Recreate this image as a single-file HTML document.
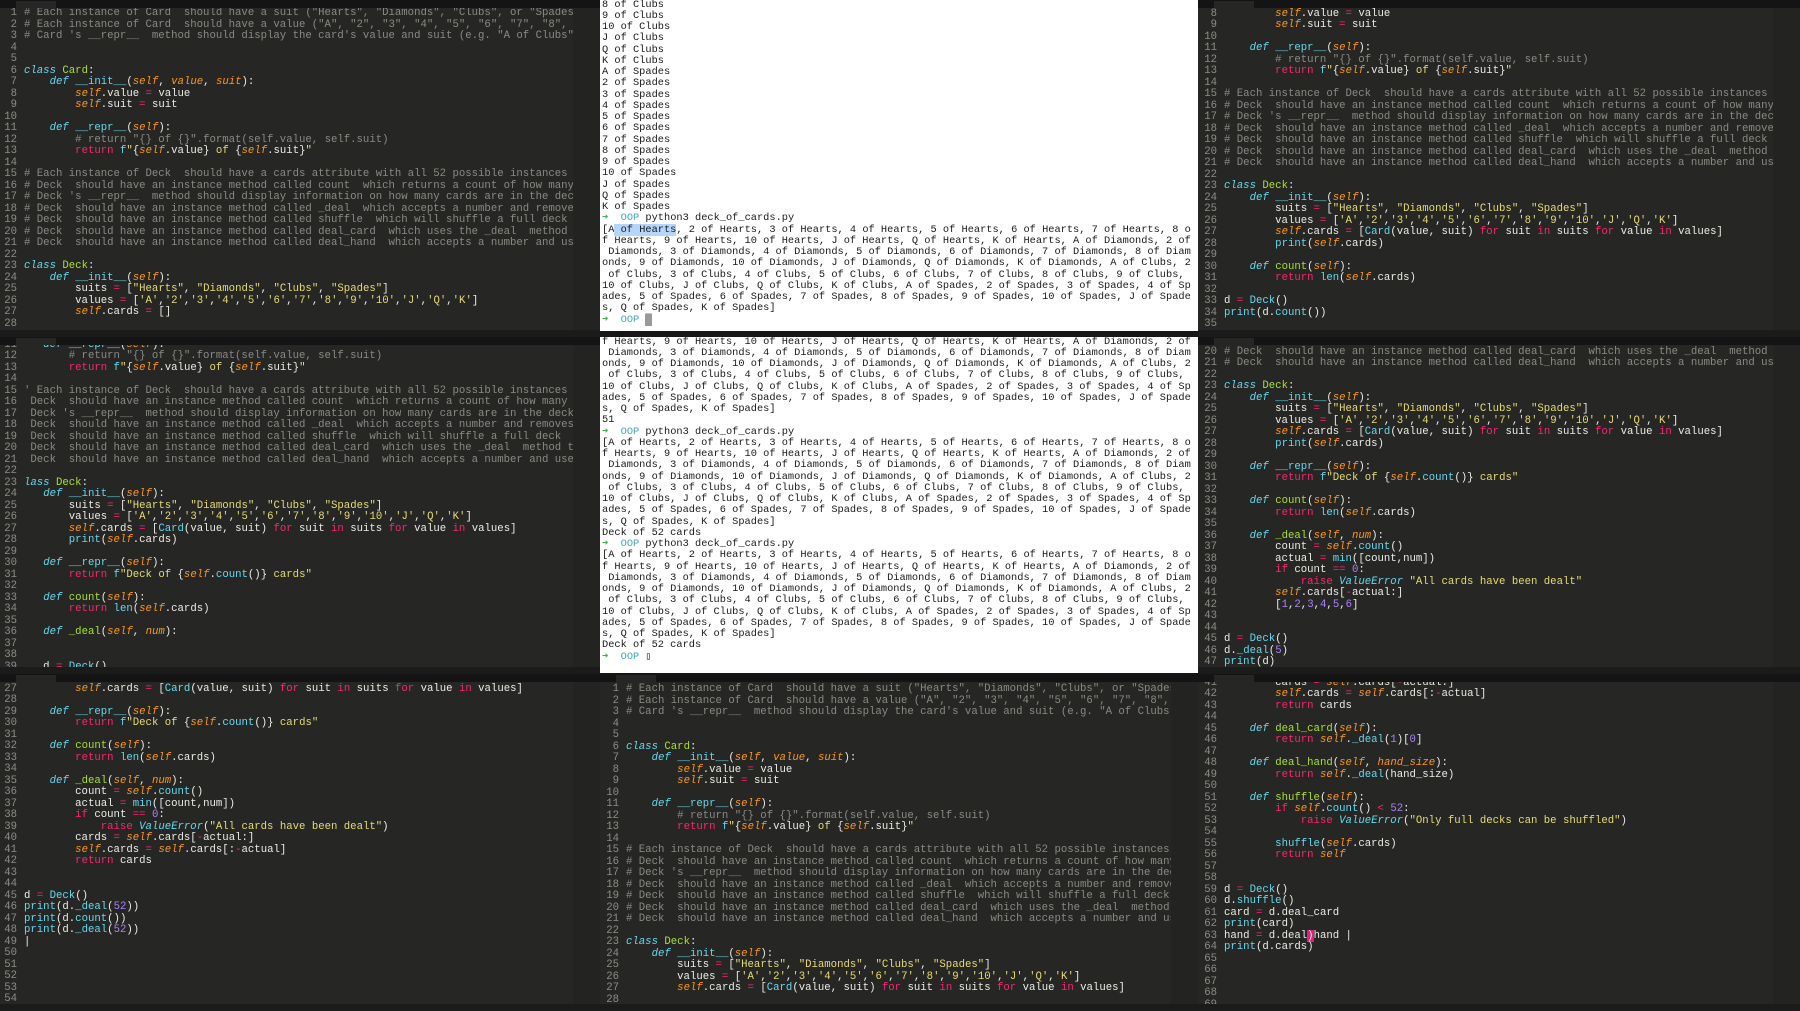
<!DOCTYPE html>
<html><head><meta charset="utf-8"><style>
*{margin:0;padding:0}
body{width:1800px;height:1011px;overflow:hidden;background:#161616;position:relative;font-family:"Liberation Mono",monospace}
.p{position:absolute;overflow:hidden;background:#262624}
.tab{position:absolute;left:0;right:0;top:0;height:8px;background:#141414;z-index:3}
.tab:after{content:"";position:absolute;left:16px;top:1px;width:40px;height:7px;background:#262624}
.st{position:absolute;left:0;right:0;bottom:0;height:7px;background:#1b1b1b;z-index:3}
.mm{position:absolute;right:0;top:0;bottom:0;width:27px;background:#232321;z-index:2}
.code{position:absolute;left:0;font-size:10.67px;line-height:11.5px;white-space:normal;color:#ecece6}
.code div{height:11.5px;white-space:pre}
l{display:inline-block;width:17px;text-align:right;color:#8d8d88;margin-right:7px}
k{color:#66d9ef;font-style:italic}
g{color:#a6e22e}
o{color:#fd971f;font-style:italic}
y{color:#e6db74}
r{color:#f92672}
m{color:#ae81ff}
c{color:#8a8a84}
t{color:#66d9ef}
.term{position:absolute;background:#fff;left:600px;width:598px;overflow:hidden}
.term pre{position:absolute;left:2px;font-family:"Liberation Mono",monospace;font-size:10.33px;line-height:11.25px;color:#1a1a1a}
.ar{color:#39b54a;font-weight:bold}.oo{color:#3aa9bd}
.hl{background:#b5d5fb}
.cur{background:#999;color:#999}
</style></head><body>

<!-- Panel A -->
<div class="p" style="left:0;top:0;width:600px;height:337px">
<div class="tab"></div><div class="mm"></div><div class="st"></div>
<div class="code" style="top:8px">
<div><l>1</l><c># Each instance of Card  should have a suit ("Hearts", "Diamonds", "Clubs", or "Spades")</c></div>
<div><l>2</l><c># Each instance of Card  should have a value ("A", "2", "3", "4", "5", "6", "7", "8", "9", "10")</c></div>
<div><l>3</l><c># Card 's __repr__  method should display the card's value and suit (e.g. "A of Clubs")</c></div>
<div><l>4</l></div>
<div><l>5</l></div>
<div><l>6</l><k>class</k> <g>Card</g>:</div>
<div><l>7</l>    <k>def</k> <t>__init__</t>(<o>self</o>, <o>value</o>, <o>suit</o>):</div>
<div><l>8</l>        <o>self</o>.value <r>=</r> value</div>
<div><l>9</l>        <o>self</o>.suit <r>=</r> suit</div>
<div><l>10</l></div>
<div><l>11</l>    <k>def</k> <t>__repr__</t>(<o>self</o>):</div>
<div><l>12</l>        <c># return "{} of {}".format(self.value, self.suit)</c></div>
<div><l>13</l>        <r>return</r> <t>f</t><y>"</y>{<o>self</o>.value}<y> of </y>{<o>self</o>.suit}<y>"</y></div>
<div><l>14</l></div>
<div><l>15</l><c># Each instance of Deck  should have a cards attribute with all 52 possible instances</c></div>
<div><l>16</l><c># Deck  should have an instance method called count  which returns a count of how many</c></div>
<div><l>17</l><c># Deck 's __repr__  method should display information on how many cards are in the deck</c></div>
<div><l>18</l><c># Deck  should have an instance method called _deal  which accepts a number and removes</c></div>
<div><l>19</l><c># Deck  should have an instance method called shuffle  which will shuffle a full deck</c></div>
<div><l>20</l><c># Deck  should have an instance method called deal_card  which uses the _deal  method</c></div>
<div><l>21</l><c># Deck  should have an instance method called deal_hand  which accepts a number and uses</c></div>
<div><l>22</l></div>
<div><l>23</l><k>class</k> <g>Deck</g>:</div>
<div><l>24</l>    <k>def</k> <t>__init__</t>(<o>self</o>):</div>
<div><l>25</l>        suits <r>=</r> [<y>"Hearts"</y>, <y>"Diamonds"</y>, <y>"Clubs"</y>, <y>"Spades"</y>]</div>
<div><l>26</l>        values <r>=</r> [<y>'A'</y>,<y>'2'</y>,<y>'3'</y>,<y>'4'</y>,<y>'5'</y>,<y>'6'</y>,<y>'7'</y>,<y>'8'</y>,<y>'9'</y>,<y>'10'</y>,<y>'J'</y>,<y>'Q'</y>,<y>'K'</y>]</div>
<div><l>27</l>        <o>self</o>.cards <r>=</r> []</div>
<div><l>28</l></div>
</div></div>

<!-- Terminal top -->
<div class="term" style="top:0;height:331px"><pre style="top:-0.5px">8 of Clubs
9 of Clubs
10 of Clubs
J of Clubs
Q of Clubs
K of Clubs
A of Spades
2 of Spades
3 of Spades
4 of Spades
5 of Spades
6 of Spades
7 of Spades
8 of Spades
9 of Spades
10 of Spades
J of Spades
Q of Spades
K of Spades
<span class="ar">➜</span>  <span class="oo">OOP</span> python3 deck_of_cards.py
[A<span class="hl"> of Hearts</span>, 2 of Hearts, 3 of Hearts, 4 of Hearts, 5 of Hearts, 6 of Hearts, 7 of Hearts, 8 o
f Hearts, 9 of Hearts, 10 of Hearts, J of Hearts, Q of Hearts, K of Hearts, A of Diamonds, 2 of
 Diamonds, 3 of Diamonds, 4 of Diamonds, 5 of Diamonds, 6 of Diamonds, 7 of Diamonds, 8 of Diam
onds, 9 of Diamonds, 10 of Diamonds, J of Diamonds, Q of Diamonds, K of Diamonds, A of Clubs, 2
 of Clubs, 3 of Clubs, 4 of Clubs, 5 of Clubs, 6 of Clubs, 7 of Clubs, 8 of Clubs, 9 of Clubs,
10 of Clubs, J of Clubs, Q of Clubs, K of Clubs, A of Spades, 2 of Spades, 3 of Spades, 4 of Sp
ades, 5 of Spades, 6 of Spades, 7 of Spades, 8 of Spades, 9 of Spades, 10 of Spades, J of Spade
s, Q of Spades, K of Spades]
<span class="ar">➜</span>  <span class="oo">OOP</span> <span class="cur">█</span></pre></div>

<!-- Terminal middle -->
<div class="term" style="top:337px;height:336px"><pre style="top:-0.5px">f Hearts, 9 of Hearts, 10 of Hearts, J of Hearts, Q of Hearts, K of Hearts, A of Diamonds, 2 of
 Diamonds, 3 of Diamonds, 4 of Diamonds, 5 of Diamonds, 6 of Diamonds, 7 of Diamonds, 8 of Diam
onds, 9 of Diamonds, 10 of Diamonds, J of Diamonds, Q of Diamonds, K of Diamonds, A of Clubs, 2
 of Clubs, 3 of Clubs, 4 of Clubs, 5 of Clubs, 6 of Clubs, 7 of Clubs, 8 of Clubs, 9 of Clubs,
10 of Clubs, J of Clubs, Q of Clubs, K of Clubs, A of Spades, 2 of Spades, 3 of Spades, 4 of Sp
ades, 5 of Spades, 6 of Spades, 7 of Spades, 8 of Spades, 9 of Spades, 10 of Spades, J of Spade
s, Q of Spades, K of Spades]
51
<span class="ar">➜</span>  <span class="oo">OOP</span> python3 deck_of_cards.py
[A of Hearts, 2 of Hearts, 3 of Hearts, 4 of Hearts, 5 of Hearts, 6 of Hearts, 7 of Hearts, 8 o
f Hearts, 9 of Hearts, 10 of Hearts, J of Hearts, Q of Hearts, K of Hearts, A of Diamonds, 2 of
 Diamonds, 3 of Diamonds, 4 of Diamonds, 5 of Diamonds, 6 of Diamonds, 7 of Diamonds, 8 of Diam
onds, 9 of Diamonds, 10 of Diamonds, J of Diamonds, Q of Diamonds, K of Diamonds, A of Clubs, 2
 of Clubs, 3 of Clubs, 4 of Clubs, 5 of Clubs, 6 of Clubs, 7 of Clubs, 8 of Clubs, 9 of Clubs,
10 of Clubs, J of Clubs, Q of Clubs, K of Clubs, A of Spades, 2 of Spades, 3 of Spades, 4 of Sp
ades, 5 of Spades, 6 of Spades, 7 of Spades, 8 of Spades, 9 of Spades, 10 of Spades, J of Spade
s, Q of Spades, K of Spades]
Deck of 52 cards
<span class="ar">➜</span>  <span class="oo">OOP</span> python3 deck_of_cards.py
[A of Hearts, 2 of Hearts, 3 of Hearts, 4 of Hearts, 5 of Hearts, 6 of Hearts, 7 of Hearts, 8 o
f Hearts, 9 of Hearts, 10 of Hearts, J of Hearts, Q of Hearts, K of Hearts, A of Diamonds, 2 of
 Diamonds, 3 of Diamonds, 4 of Diamonds, 5 of Diamonds, 6 of Diamonds, 7 of Diamonds, 8 of Diam
onds, 9 of Diamonds, 10 of Diamonds, J of Diamonds, Q of Diamonds, K of Diamonds, A of Clubs, 2
 of Clubs, 3 of Clubs, 4 of Clubs, 5 of Clubs, 6 of Clubs, 7 of Clubs, 8 of Clubs, 9 of Clubs,
10 of Clubs, J of Clubs, Q of Clubs, K of Clubs, A of Spades, 2 of Spades, 3 of Spades, 4 of Sp
ades, 5 of Spades, 6 of Spades, 7 of Spades, 8 of Spades, 9 of Spades, 10 of Spades, J of Spade
s, Q of Spades, K of Spades]
Deck of 52 cards
<span class="ar">➜</span>  <span class="oo">OOP</span> ▯</pre></div>

<!-- Panel C -->
<div class="p" style="left:1198px;top:0;width:602px;height:337px">
<div class="tab"></div><div class="mm"></div><div class="st"></div>
<div class="code" style="top:8.5px;left:2px">
<div><l>8</l>        <o>self</o>.value <r>=</r> value</div>
<div><l>9</l>        <o>self</o>.suit <r>=</r> suit</div>
<div><l>10</l></div>
<div><l>11</l>    <k>def</k> <t>__repr__</t>(<o>self</o>):</div>
<div><l>12</l>        <c># return "{} of {}".format(self.value, self.suit)</c></div>
<div><l>13</l>        <r>return</r> <t>f</t><y>"</y>{<o>self</o>.value}<y> of </y>{<o>self</o>.suit}<y>"</y></div>
<div><l>14</l></div>
<div><l>15</l><c># Each instance of Deck  should have a cards attribute with all 52 possible instances</c></div>
<div><l>16</l><c># Deck  should have an instance method called count  which returns a count of how many</c></div>
<div><l>17</l><c># Deck 's __repr__  method should display information on how many cards are in the dec</c></div>
<div><l>18</l><c># Deck  should have an instance method called _deal  which accepts a number and remove</c></div>
<div><l>19</l><c># Deck  should have an instance method called shuffle  which will shuffle a full deck</c></div>
<div><l>20</l><c># Deck  should have an instance method called deal_card  which uses the _deal  method</c></div>
<div><l>21</l><c># Deck  should have an instance method called deal_hand  which accepts a number and us</c></div>
<div><l>22</l></div>
<div><l>23</l><k>class</k> <g>Deck</g>:</div>
<div><l>24</l>    <k>def</k> <t>__init__</t>(<o>self</o>):</div>
<div><l>25</l>        suits <r>=</r> [<y>"Hearts"</y>, <y>"Diamonds"</y>, <y>"Clubs"</y>, <y>"Spades"</y>]</div>
<div><l>26</l>        values <r>=</r> [<y>'A'</y>,<y>'2'</y>,<y>'3'</y>,<y>'4'</y>,<y>'5'</y>,<y>'6'</y>,<y>'7'</y>,<y>'8'</y>,<y>'9'</y>,<y>'10'</y>,<y>'J'</y>,<y>'Q'</y>,<y>'K'</y>]</div>
<div><l>27</l>        <o>self</o>.cards <r>=</r> [<t>Card</t>(value, suit) <r>for</r> suit <r>in</r> suits <r>for</r> value <r>in</r> values]</div>
<div><l>28</l>        <t>print</t>(<o>self</o>.cards)</div>
<div><l>29</l></div>
<div><l>30</l>    <k>def</k> <g>count</g>(<o>self</o>):</div>
<div><l>31</l>        <r>return</r> <t>len</t>(<o>self</o>.cards)</div>
<div><l>32</l></div>
<div><l>33</l>d <r>=</r> <t>Deck</t>()</div>
<div><l>34</l><t>print</t>(d.<t>count</t>())</div>
<div><l>35</l></div>
</div></div>

<!-- Panel D -->
<div class="p" style="left:0;top:337px;width:600px;height:337px">
<div class="tab"></div><div class="mm"></div><div class="st"></div>
<div class="code" style="top:2.5px">
<div><l>11</l>   <k>def</k> <t>__repr__</t>(<o>self</o>):</div>
<div><l>12</l>       <c># return "{} of {}".format(self.value, self.suit)</c></div>
<div><l>13</l>       <r>return</r> <t>f</t><y>"</y>{<o>self</o>.value}<y> of </y>{<o>self</o>.suit}<y>"</y></div>
<div><l>14</l></div>
<div><l>15</l><c>' Each instance of Deck  should have a cards attribute with all 52 possible instances o</c></div>
<div><l>16</l><c> Deck  should have an instance method called count  which returns a count of how many</c></div>
<div><l>17</l><c> Deck 's __repr__  method should display information on how many cards are in the deck</c></div>
<div><l>18</l><c> Deck  should have an instance method called _deal  which accepts a number and removes</c></div>
<div><l>19</l><c> Deck  should have an instance method called shuffle  which will shuffle a full deck</c></div>
<div><l>20</l><c> Deck  should have an instance method called deal_card  which uses the _deal  method t</c></div>
<div><l>21</l><c> Deck  should have an instance method called deal_hand  which accepts a number and use</c></div>
<div><l>22</l></div>
<div><l>23</l><k>lass</k> <g>Deck</g>:</div>
<div><l>24</l>   <k>def</k> <t>__init__</t>(<o>self</o>):</div>
<div><l>25</l>       suits <r>=</r> [<y>"Hearts"</y>, <y>"Diamonds"</y>, <y>"Clubs"</y>, <y>"Spades"</y>]</div>
<div><l>26</l>       values <r>=</r> [<y>'A'</y>,<y>'2'</y>,<y>'3'</y>,<y>'4'</y>,<y>'5'</y>,<y>'6'</y>,<y>'7'</y>,<y>'8'</y>,<y>'9'</y>,<y>'10'</y>,<y>'J'</y>,<y>'Q'</y>,<y>'K'</y>]</div>
<div><l>27</l>       <o>self</o>.cards <r>=</r> [<t>Card</t>(value, suit) <r>for</r> suit <r>in</r> suits <r>for</r> value <r>in</r> values]</div>
<div><l>28</l>       <t>print</t>(<o>self</o>.cards)</div>
<div><l>29</l></div>
<div><l>30</l>   <k>def</k> <t>__repr__</t>(<o>self</o>):</div>
<div><l>31</l>       <r>return</r> <t>f</t><y>"Deck of </y>{<o>self</o>.<t>count</t>()}<y> cards"</y></div>
<div><l>32</l></div>
<div><l>33</l>   <k>def</k> <g>count</g>(<o>self</o>):</div>
<div><l>34</l>       <r>return</r> <t>len</t>(<o>self</o>.cards)</div>
<div><l>35</l></div>
<div><l>36</l>   <k>def</k> <g>_deal</g>(<o>self</o>, <o>num</o>):</div>
<div><l>37</l></div>
<div><l>38</l></div>
<div><l>39</l>   d <r>=</r> <t>Deck</t>()</div>
</div></div>

<!-- Panel F -->
<div class="p" style="left:1198px;top:337px;width:602px;height:337px">
<div class="tab"></div><div class="mm"></div><div class="st"></div>
<div class="code" style="top:9.5px;left:2px">
<div><l>20</l><c># Deck  should have an instance method called deal_card  which uses the _deal  method</c></div>
<div><l>21</l><c># Deck  should have an instance method called deal_hand  which accepts a number and us</c></div>
<div><l>22</l></div>
<div><l>23</l><k>class</k> <g>Deck</g>:</div>
<div><l>24</l>    <k>def</k> <t>__init__</t>(<o>self</o>):</div>
<div><l>25</l>        suits <r>=</r> [<y>"Hearts"</y>, <y>"Diamonds"</y>, <y>"Clubs"</y>, <y>"Spades"</y>]</div>
<div><l>26</l>        values <r>=</r> [<y>'A'</y>,<y>'2'</y>,<y>'3'</y>,<y>'4'</y>,<y>'5'</y>,<y>'6'</y>,<y>'7'</y>,<y>'8'</y>,<y>'9'</y>,<y>'10'</y>,<y>'J'</y>,<y>'Q'</y>,<y>'K'</y>]</div>
<div><l>27</l>        <o>self</o>.cards <r>=</r> [<t>Card</t>(value, suit) <r>for</r> suit <r>in</r> suits <r>for</r> value <r>in</r> values]</div>
<div><l>28</l>        <t>print</t>(<o>self</o>.cards)</div>
<div><l>29</l></div>
<div><l>30</l>    <k>def</k> <t>__repr__</t>(<o>self</o>):</div>
<div><l>31</l>        <r>return</r> <t>f</t><y>"Deck of </y>{<o>self</o>.<t>count</t>()}<y> cards"</y></div>
<div><l>32</l></div>
<div><l>33</l>    <k>def</k> <g>count</g>(<o>self</o>):</div>
<div><l>34</l>        <r>return</r> <t>len</t>(<o>self</o>.cards)</div>
<div><l>35</l></div>
<div><l>36</l>    <k>def</k> <g>_deal</g>(<o>self</o>, <o>num</o>):</div>
<div><l>37</l>        count <r>=</r> <o>self</o>.<t>count</t>()</div>
<div><l>38</l>        actual <r>=</r> <t>min</t>([count,num])</div>
<div><l>39</l>        <r>if</r> count <r>==</r> <m>0</m>:</div>
<div><l>40</l>            <r>raise</r> <k>ValueError</k> <y>"All cards have been dealt"</y></div>
<div><l>41</l>        <o>self</o>.cards[<r>-</r>actual:]</div>
<div><l>42</l>        [<m>1</m>,<m>2</m>,<m>3</m>,<m>4</m>,<m>5</m>,<m>6</m>]</div>
<div><l>43</l></div>
<div><l>44</l></div>
<div><l>45</l>d <r>=</r> <t>Deck</t>()</div>
<div><l>46</l>d.<t>_deal</t>(<m>5</m>)</div>
<div><l>47</l><t>print</t>(d)</div>
</div></div>

<!-- Panel G -->
<div class="p" style="left:0;top:674px;width:600px;height:337px">
<div class="tab"></div><div class="mm"></div><div class="st"></div>
<div class="code" style="top:9.5px">
<div><l>27</l>        <o>self</o>.cards <r>=</r> [<t>Card</t>(value, suit) <r>for</r> suit <r>in</r> suits <r>for</r> value <r>in</r> values]</div>
<div><l>28</l></div>
<div><l>29</l>    <k>def</k> <t>__repr__</t>(<o>self</o>):</div>
<div><l>30</l>        <r>return</r> <t>f</t><y>"Deck of </y>{<o>self</o>.<t>count</t>()}<y> cards"</y></div>
<div><l>31</l></div>
<div><l>32</l>    <k>def</k> <g>count</g>(<o>self</o>):</div>
<div><l>33</l>        <r>return</r> <t>len</t>(<o>self</o>.cards)</div>
<div><l>34</l></div>
<div><l>35</l>    <k>def</k> <g>_deal</g>(<o>self</o>, <o>num</o>):</div>
<div><l>36</l>        count <r>=</r> <o>self</o>.<t>count</t>()</div>
<div><l>37</l>        actual <r>=</r> <t>min</t>([count,num])</div>
<div><l>38</l>        <r>if</r> count <r>==</r> <m>0</m>:</div>
<div><l>39</l>            <r>raise</r> <k>ValueError</k>(<y>"All cards have been dealt"</y>)</div>
<div><l>40</l>        cards <r>=</r> <o>self</o>.cards[<r>-</r>actual:]</div>
<div><l>41</l>        <o>self</o>.cards <r>=</r> <o>self</o>.cards[:<r>-</r>actual]</div>
<div><l>42</l>        <r>return</r> cards</div>
<div><l>43</l></div>
<div><l>44</l></div>
<div><l>45</l>d <r>=</r> <t>Deck</t>()</div>
<div><l>46</l><t>print</t>(d.<t>_deal</t>(<m>52</m>))</div>
<div><l>47</l><t>print</t>(d.<t>count</t>())</div>
<div><l>48</l><t>print</t>(d.<t>_deal</t>(<m>52</m>))</div>
<div><l>49</l>|</div>
<div><l>50</l></div>
<div><l>51</l></div>
<div><l>52</l></div>
<div><l>53</l></div>
<div><l>54</l></div>
</div></div>

<!-- Panel H -->
<div class="p" style="left:600px;top:674px;width:598px;height:337px">
<div class="tab"></div><div class="mm"></div><div class="st"></div>
<div class="code" style="top:10px;left:2px">
<div><l>1</l><c># Each instance of Card  should have a suit ("Hearts", "Diamonds", "Clubs", or "Spades")</c></div>
<div><l>2</l><c># Each instance of Card  should have a value ("A", "2", "3", "4", "5", "6", "7", "8", "9")</c></div>
<div><l>3</l><c># Card 's __repr__  method should display the card's value and suit (e.g. "A of Clubs")</c></div>
<div><l>4</l></div>
<div><l>5</l></div>
<div><l>6</l><k>class</k> <g>Card</g>:</div>
<div><l>7</l>    <k>def</k> <t>__init__</t>(<o>self</o>, <o>value</o>, <o>suit</o>):</div>
<div><l>8</l>        <o>self</o>.value <r>=</r> value</div>
<div><l>9</l>        <o>self</o>.suit <r>=</r> suit</div>
<div><l>10</l></div>
<div><l>11</l>    <k>def</k> <t>__repr__</t>(<o>self</o>):</div>
<div><l>12</l>        <c># return "{} of {}".format(self.value, self.suit)</c></div>
<div><l>13</l>        <r>return</r> <t>f</t><y>"</y>{<o>self</o>.value}<y> of </y>{<o>self</o>.suit}<y>"</y></div>
<div><l>14</l></div>
<div><l>15</l><c># Each instance of Deck  should have a cards attribute with all 52 possible instances</c></div>
<div><l>16</l><c># Deck  should have an instance method called count  which returns a count of how many</c></div>
<div><l>17</l><c># Deck 's __repr__  method should display information on how many cards are in the dec</c></div>
<div><l>18</l><c># Deck  should have an instance method called _deal  which accepts a number and remove</c></div>
<div><l>19</l><c># Deck  should have an instance method called shuffle  which will shuffle a full deck</c></div>
<div><l>20</l><c># Deck  should have an instance method called deal_card  which uses the _deal  method</c></div>
<div><l>21</l><c># Deck  should have an instance method called deal_hand  which accepts a number and us</c></div>
<div><l>22</l></div>
<div><l>23</l><k>class</k> <g>Deck</g>:</div>
<div><l>24</l>    <k>def</k> <t>__init__</t>(<o>self</o>):</div>
<div><l>25</l>        suits <r>=</r> [<y>"Hearts"</y>, <y>"Diamonds"</y>, <y>"Clubs"</y>, <y>"Spades"</y>]</div>
<div><l>26</l>        values <r>=</r> [<y>'A'</y>,<y>'2'</y>,<y>'3'</y>,<y>'4'</y>,<y>'5'</y>,<y>'6'</y>,<y>'7'</y>,<y>'8'</y>,<y>'9'</y>,<y>'10'</y>,<y>'J'</y>,<y>'Q'</y>,<y>'K'</y>]</div>
<div><l>27</l>        <o>self</o>.cards <r>=</r> [<t>Card</t>(value, suit) <r>for</r> suit <r>in</r> suits <r>for</r> value <r>in</r> values]</div>
<div><l>28</l></div>
</div></div>

<!-- Panel I -->
<div class="p" style="left:1198px;top:674px;width:602px;height:337px">
<div class="tab"></div><div class="mm"></div><div class="st"></div>
<div class="code" style="top:3.75px;left:2px">
<div><l>41</l>        cards <r>=</r> <o>self</o>.cards[<r>-</r>actual:]</div>
<div><l>42</l>        <o>self</o>.cards <r>=</r> <o>self</o>.cards[:<r>-</r>actual]</div>
<div><l>43</l>        <r>return</r> cards</div>
<div><l>44</l></div>
<div><l>45</l>    <k>def</k> <g>deal_card</g>(<o>self</o>):</div>
<div><l>46</l>        <r>return</r> <o>self</o>.<t>_deal</t>(<m>1</m>)[<m>0</m>]</div>
<div><l>47</l></div>
<div><l>48</l>    <k>def</k> <g>deal_hand</g>(<o>self</o>, <o>hand_size</o>):</div>
<div><l>49</l>        <r>return</r> <o>self</o>.<t>_deal</t>(hand_size)</div>
<div><l>50</l></div>
<div><l>51</l>    <k>def</k> <g>shuffle</g>(<o>self</o>):</div>
<div><l>52</l>        <r>if</r> <o>self</o>.<t>count</t>() <r>&lt;</r> <m>52</m>:</div>
<div><l>53</l>            <r>raise</r> <k>ValueError</k>(<y>"Only full decks can be shuffled"</y>)</div>
<div><l>54</l></div>
<div><l>55</l>        <t>shuffle</t>(<o>self</o>.cards)</div>
<div><l>56</l>        <r>return</r> <o>self</o></div>
<div><l>57</l></div>
<div><l>58</l></div>
<div><l>59</l>d <r>=</r> <t>Deck</t>()</div>
<div><l>60</l>d.<t>shuffle</t>()</div>
<div><l>61</l>card <r>=</r> d.deal_card</div>
<div><l>62</l><t>print</t>(card)</div>
<div><l>63</l>hand <r>=</r> d.deal<span style="background:#e0207a">)</span>hand |</div>
<div><l>64</l><t>print</t>(d.cards)</div>
<div><l>65</l></div>
<div><l>66</l></div>
<div><l>67</l></div>
<div><l>68</l></div>
<div><l>69</l></div>
</div></div>

</body></html>
